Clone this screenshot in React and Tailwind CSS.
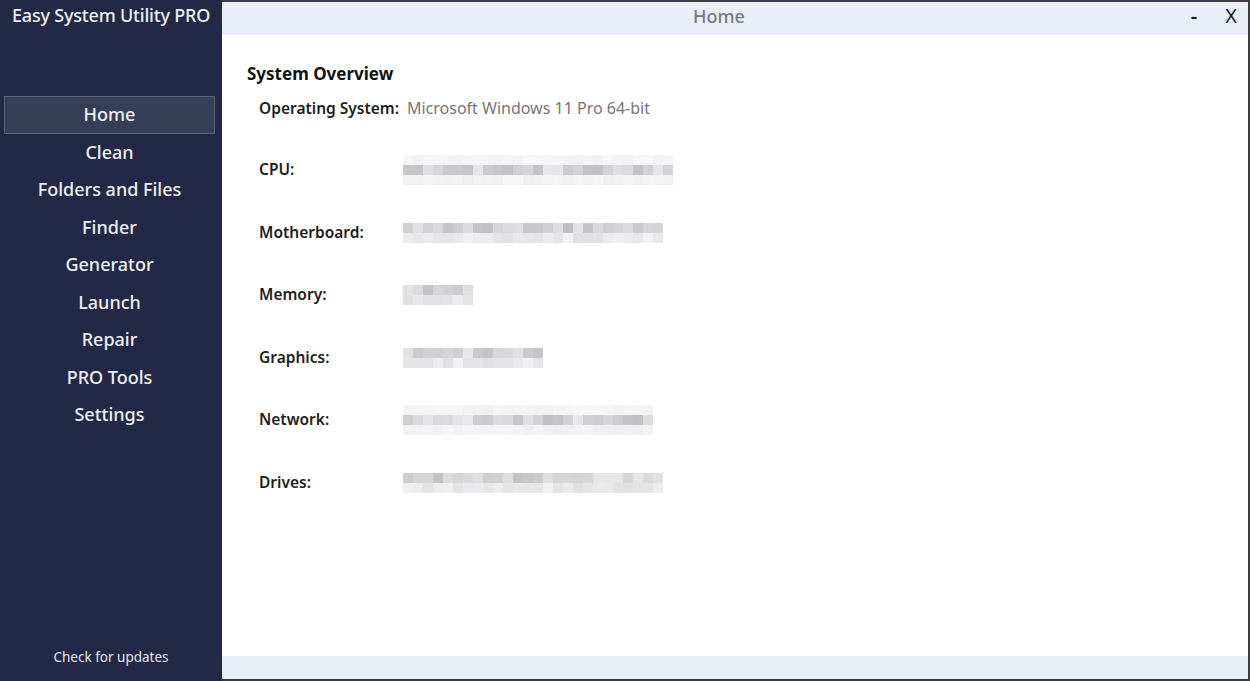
import React from "react";

const navItems = ["Home", "Clean", "Folders and Files", "Finder", "Generator", "Launch", "Repair", "PRO Tools", "Settings"];

// blurred value placeholders (pixel mosaic)
const rows = [
  { label: "CPU:", blocks: 27, lines: 3 },
  { label: "Motherboard:", blocks: 26, lines: 2 },
  { label: "Memory:", blocks: 7, lines: 2 },
  { label: "Graphics:", blocks: 14, lines: 2 },
  { label: "Network:", blocks: 25, lines: 3 },
  { label: "Drives:", blocks: 26, lines: 2 },
];

function shade(seed) {
  const x = Math.sin(seed * 12.9898) * 43758.5453;
  return x - Math.floor(x);
}

function Mosaic({ blocks, lines, seed }) {
  const weights = lines === 3 ? [0.15, 1, 0.2] : [1, 0.45];
  return (
    <div className="flex flex-col">
      {weights.map((w, r) => (
        <div key={r} className="flex">
          {Array.from({ length: blocks }).map((_, i) => {
            const s = shade(seed * 100 + r * 37 + i);
            const d = Math.round(250 - w * (18 + s * 40));
            return <div key={i} className="h-[10px] w-[10px]" style={{ background: `rgb(${d},${d},${d + 2})` }} />;
          })}
        </div>
      ))}
    </div>
  );
}

export default function App() {
  return (
    <div className="flex h-[681px] w-[1250px] overflow-hidden bg-white" style={{ fontFamily: '"Noto Sans", "Open Sans", sans-serif' }}>
      <aside className="flex w-[222px] shrink-0 flex-col bg-[#232846] text-[#eef0f6]">
        <div className="pl-[12px] pt-[3px] text-[18px] leading-[24px] font-medium tracking-[-0.2px]">Easy System Utility PRO</div>
        <nav className="mt-[69px] flex flex-col pl-[4px] pr-[7px]">
          {navItems.map((n, i) => (
            <div
              key={n}
              className={
                "flex h-[37.5px] items-center justify-center text-[18px] font-medium " +
                (i === 0 ? "border border-[#5b6275] bg-[#363e58]" : "border border-transparent")
              }
            >
              {n}
            </div>
          ))}
        </nav>
        <div className="mt-auto pb-[14px] text-center text-[13.5px] text-[#e4e6ee]">Check for updates</div>
      </aside>

      <main className="flex flex-1 flex-col border-t-2 border-r-2 border-b-2 border-[#3c3c3c]">
        <header className="relative flex h-[33px] shrink-0 items-center justify-center bg-[#e9eef9] pr-[32px] pb-[5px]">
          <span className="text-[18px] font-medium text-[#777a80]">Home</span>
          <div className="absolute right-[11px] top-0 flex h-full items-center gap-[28px] pb-[5px] text-[20px] text-[#1a1a1a]">
            <span className="font-semibold">-</span>
            <span>X</span>
          </div>
        </header>

        <section className="flex-1 pl-[25px] pt-[27px]">
          <h1 className="text-[17px] font-bold leading-[24px] text-[#111]">System Overview</h1>
          <div className="mt-[12px] flex items-baseline pl-[12px] leading-[20px]">
            <span className="text-[15.5px] font-semibold text-[#1d1d1d]">Operating System:</span>
            <span className="ml-[8px] text-[16px] text-[#767676]">Microsoft Windows 11 Pro 64-bit</span>
          </div>
          <div className="mt-[37px] flex flex-col gap-[32.5px] pl-[12px]">
            {rows.map((r, i) => (
              <div key={r.label} className="flex h-[30px] items-center">
                <span className="w-[144px] text-[15.5px] font-semibold text-[#1d1d1d]">{r.label}</span>
                <Mosaic blocks={r.blocks} lines={r.lines} seed={i + 1} />
              </div>
            ))}
          </div>
        </section>

        <footer className="h-[23px] shrink-0 bg-[#e9eef9]" />
      </main>
    </div>
  );
}
